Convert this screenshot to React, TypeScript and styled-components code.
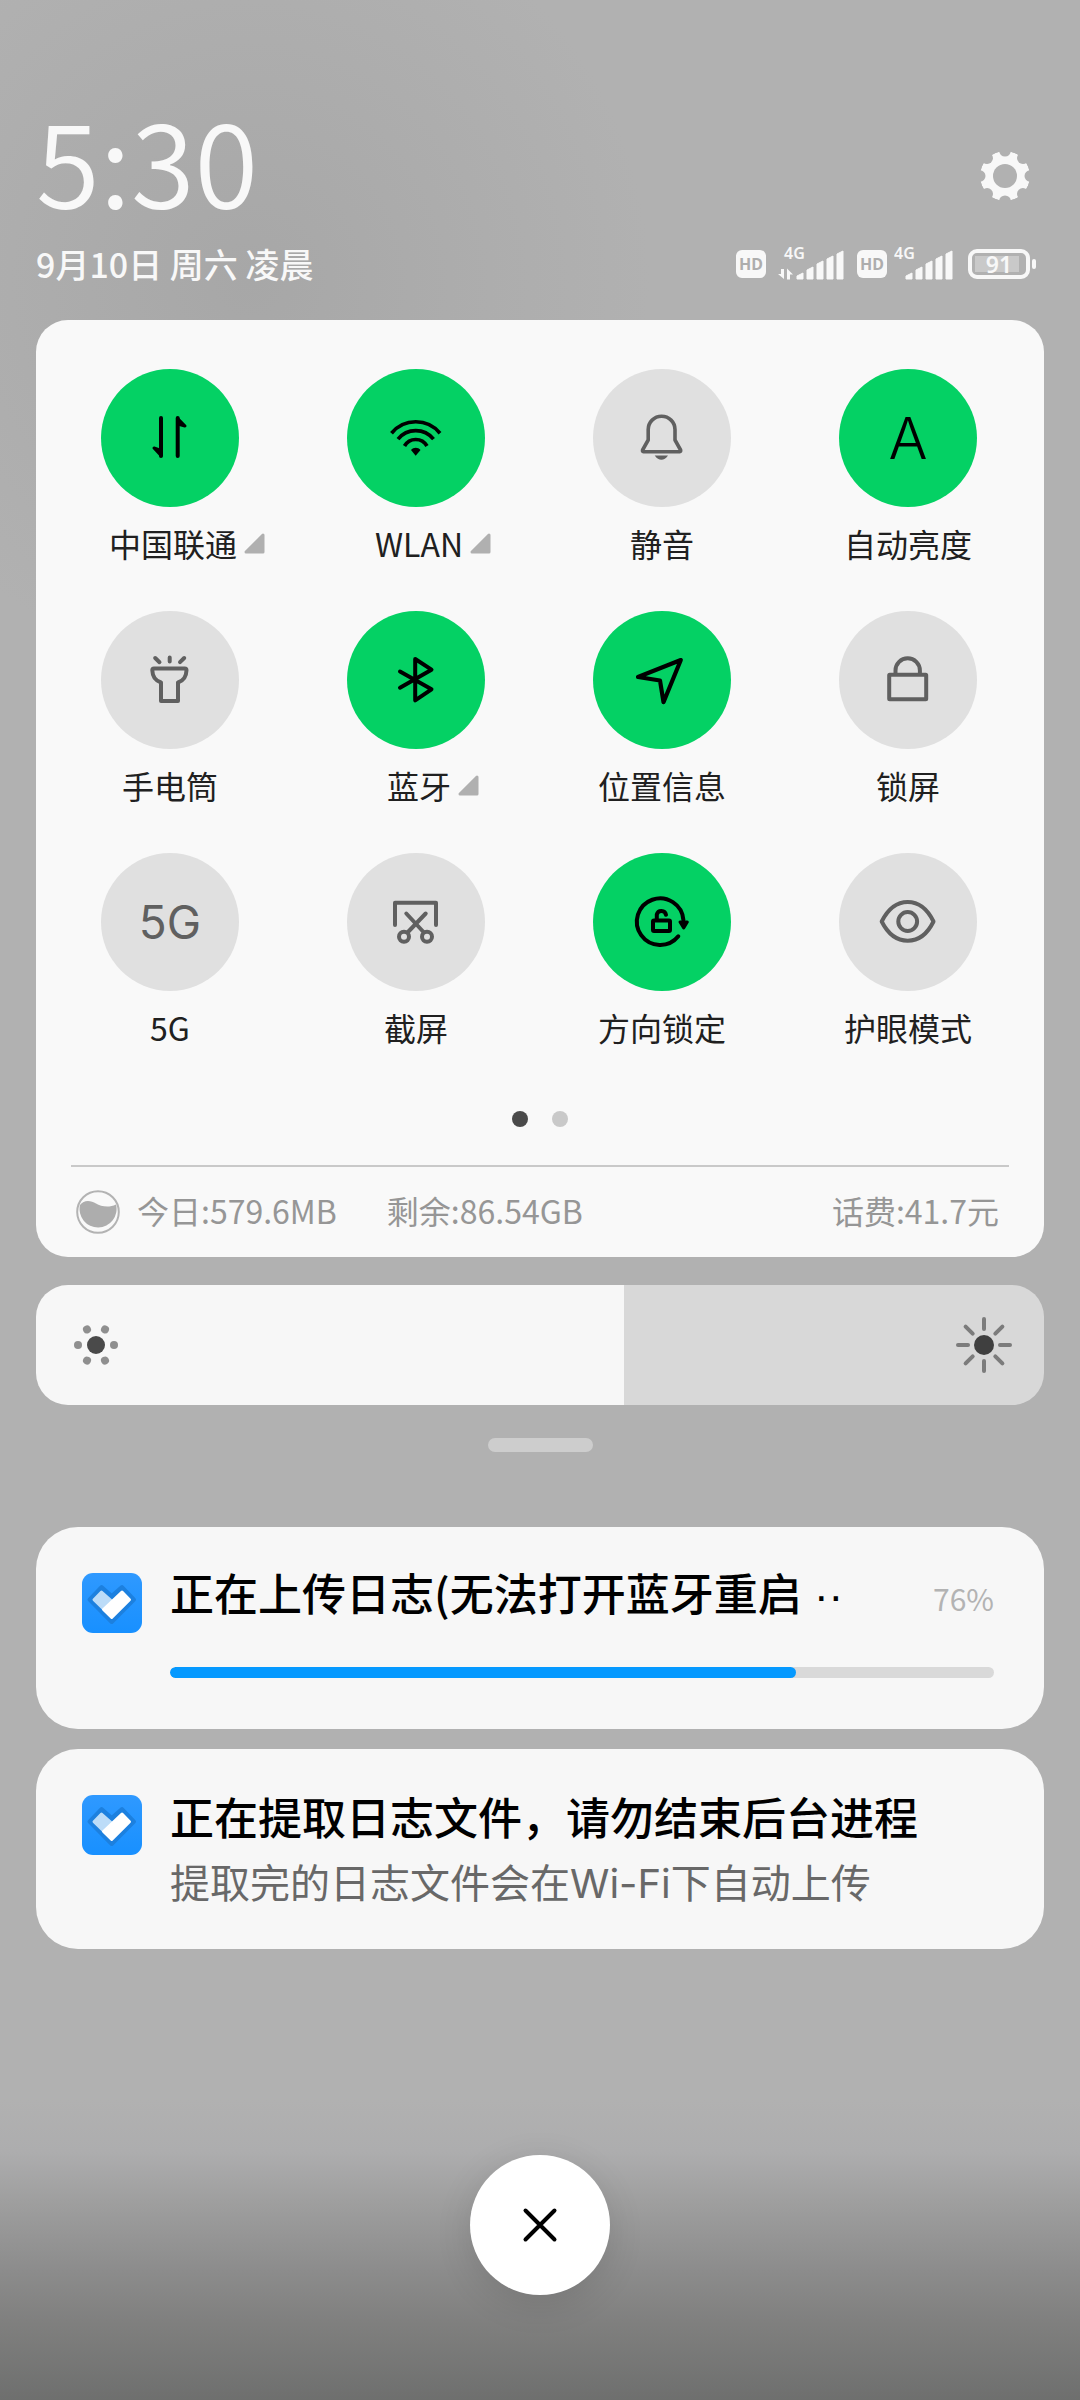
import React, { useState } from "react";
import styled, { createGlobalStyle } from "styled-components";

const GlobalStyle = createGlobalStyle`
  *, *::before, *::after { box-sizing: border-box; }
  body {
    margin: 0;
    background: #b1b1b1;
    font-family: "Noto Sans CJK SC", "Noto Sans", sans-serif;
  }
  button { font: inherit; color: inherit; border: 0; padding: 0; background: none; cursor: pointer; }
  ul { list-style: none; margin: 0; padding: 0; }
  h1, h2, p { margin: 0; font-weight: inherit; }
`;

const Shade = styled.main`
  display: flex;
  flex-direction: column;
  min-height: 100vh;
  padding: 82px 36px 105px;
  background:
    linear-gradient(to top, #6e6f6e 0, #80807f 80px, #8c8c8c 130px, #9f9f9f 200px, #adadae 248px, rgba(177, 177, 177, 0) 300px),
    radial-gradient(circle at 250px 280px, #a7a7a7 0, rgba(167, 167, 167, 0) 400px),
    #b1b1b1;
`;

const Header = styled.header`
  display: flex;
  justify-content: space-between;
  align-items: flex-start;
  height: 154px;
`;

const Clock = styled.h1`
  font-size: 116px;
  line-height: 150px;
  font-weight: 350;
  color: #f8f8f8;
`;

const SettingsButton = styled.button`
  display: flex;
  margin: 69px 14px 0 0;
`;

const StatusRow = styled.div`
  display: flex;
  justify-content: space-between;
  align-items: center;
  height: 56px;
  margin-bottom: 28px;
  color: #f8f8f8;
`;

const DateText = styled.p`
  font-size: 34px;
  line-height: 48px;
  font-weight: 500;
`;

const StatusIcons = styled.div`
  display: flex;
  align-items: center;
  gap: 7px;
  padding-right: 8px;
`;

const HdBadge = styled.span`
  display: flex;
  align-items: center;
  justify-content: center;
  width: 30px;
  height: 28px;
  border-radius: 6px;
  background: #f8f8f8;
  color: #adadad;
  font: 700 16px/28px "Noto Sans", sans-serif;
`;

const Battery = styled.div`
  display: flex;
  align-items: center;
  gap: 2px;
  margin-left: 7px;
  &::after {
    content: "";
    width: 4px;
    height: 10px;
    border-radius: 2px;
    background: #f8f8f8;
  }
`;

const BatteryCell = styled.span`
  width: 62px;
  height: 30px;
  border: 4px solid #f8f8f8;
  border-radius: 9px;
  background: linear-gradient(#c9c9c9, #c9c9c9) 3px 3px / 44px 16px no-repeat;
  font: 600 23px/22px "Noto Sans", sans-serif;
  text-align: center;
`;

const Panel = styled.section`
  border-radius: 32px;
  background: #f9f9f9;
  padding: 49px 13px 0 11px;
`;

const TileGrid = styled.ul`
  display: grid;
  grid-template-columns: repeat(4, 1fr);
  row-gap: 46px;
`;

const Tile = styled.button`
  display: flex;
  flex-direction: column;
  align-items: center;
  gap: 14px;
  width: 100%;
`;

const TileDisc = styled.span<{ $on?: boolean }>`
  display: flex;
  align-items: center;
  justify-content: center;
  width: 138px;
  height: 138px;
  border-radius: 50%;
  background: ${(p) => (p.$on ? "#04d164" : "#e0e0e0")};
  color: ${(p) => (p.$on ? "#000" : "#606060")};
`;

const TileGlyph = styled.span<{ $size: number; $weight: number }>`
  font-family: Inter, sans-serif;
  font-size: ${(p) => p.$size}px;
  line-height: 60px;
  font-weight: ${(p) => p.$weight};
`;

const TileLabel = styled.span<{ $more?: boolean }>`
  display: grid;
  grid-template-columns: 1fr auto 1fr;
  align-items: center;
  width: 100%;
  padding-left: ${(p) => (p.$more ? 6 : 0)}px;
  font-size: 32px;
  line-height: 44px;
  color: #202020;
  & > span { grid-column: 2; white-space: nowrap; }
  & > svg { margin-left: 5px; }
`;

const Pager = styled.div`
  display: flex;
  justify-content: center;
  gap: 24px;
  margin-top: 62px;
  padding-left: 2px;
`;

const PagerDot = styled.button<{ $current?: boolean }>`
  width: 16px;
  height: 16px;
  border-radius: 50%;
  background: ${(p) => (p.$current ? "#4a4a4a" : "#c9c9c9")};
`;

const Usage = styled.footer`
  display: flex;
  align-items: center;
  height: 92px;
  margin: 38px 22px 0 24px;
  padding: 0 10px 0 5px;
  border-top: 2px solid #c9c9c9;
  color: #969696;
  font-size: 32px;
  line-height: 44px;
`;

const UsageItem = styled.span`
  margin-left: 17px;
  padding-bottom: 4px;
  & + & { margin-left: 50px; }
  &:last-child { margin-left: auto; }
`;

const Brightness = styled.div`
  display: grid;
  align-items: center;
  margin-top: 28px;
  & > * { grid-area: 1 / 1; }
  & > svg { pointer-events: none; }
  & > svg:last-child { justify-self: end; }
`;

const Range = styled.input`
  appearance: none;
  width: 100%;
  height: 120px;
  margin: 0;
  border-radius: 32px;
  &::-webkit-slider-thumb { appearance: none; width: 1px; height: 120px; background: transparent; }
`;

const Handle = styled.div`
  width: 105px;
  height: 14px;
  margin: 33px auto 75px;
  border-radius: 7px;
  background: #cdcdcd;
`;

const Notices = styled.ul`
  display: flex;
  flex-direction: column;
  gap: 20px;
`;

const Notice = styled.li`
  display: flex;
  align-items: flex-start;
  gap: 28px;
  padding: 34px 50px 30px 46px;
  border-radius: 42px;
  background: #f7f7f7;
  & > svg { flex: none; margin-top: 12px; }
`;

const NoticeBody = styled.div`
  flex: 1;
  min-width: 0;
`;

const NoticeHead = styled.div`
  display: flex;
  justify-content: space-between;
  align-items: center;
  height: 66px;
`;

const NoticeTitle = styled.h2`
  font-size: 44px;
  line-height: 66px;
  font-weight: 500;
  color: #000;
  white-space: nowrap;
`;

const Clipped = styled.span`
  font-family: "Liberation Sans", sans-serif;
`;

const Percent = styled.span`
  padding-top: 8px;
  font-size: 30px;
  line-height: 44px;
  color: #b3b3b3;
`;

const NoticeText = styled.p`
  font-family: Inter, "Noto Sans CJK SC", sans-serif;
  font-size: 40px;
  line-height: 70px;
  color: #686868;
`;

const Track = styled.div`
  height: 11px;
  margin: 40px 0 21px;
  border-radius: 6px;
  background: #d9d9d9;
  overflow: hidden;
`;

const Bar = styled.div`
  height: 100%;
  border-radius: 6px;
  background: #0599ff;
`;

const CloseButton = styled.button`
  display: flex;
  align-items: center;
  justify-content: center;
  width: 140px;
  height: 140px;
  margin: auto auto 0;
  border-radius: 50%;
  background: #fff;
  box-shadow: 0 8px 36px rgba(0, 0, 0, 0.12);
`;

const TileIcon = ({ children, width = 4 }: { children: React.ReactNode; width?: number }) => (
  <svg
    width="138"
    height="138"
    viewBox="0 0 138 138"
    fill="none"
    stroke="currentColor"
    strokeWidth={width}
    strokeLinecap="round"
    strokeLinejoin="round"
    aria-hidden="true"
  >
    {children}
  </svg>
);

const icons: Record<string, React.ReactNode> = {
  data: (
    <TileIcon>
      <path d="M60 49V87M76.7 49V87" />
      <path d="M60 86.500L53 79L60 81.500ZM76.700 49.500L84 57L76.700 55Z" fill="currentColor" strokeWidth="3" />
    </TileIcon>
  ),
  wifi: (
    <TileIcon width={3.7}>
      <g strokeLinecap="butt">
        <path d="M44.500 64.200A31.400 31.400 0 0 1 93 64.200" />
        <path d="M51 70.200A22.700 22.700 0 0 1 86.500 70.200" />
        <path d="M57.500 77A13 13 0 0 1 80 77" />
      </g>
      <path d="M64 81C66.500 77.900 71 77.900 73.500 81L68.700 86.700Z" fill="currentColor" stroke="none" />
    </TileIcon>
  ),
  bell: (
    <TileIcon width={3.6}>
      <path d="M55.200 71V60.600A13.400 13.400 0 0 1 82 60.600V71L87.600 81Q88 82.700 86.800 82.700H50.400Q49.200 82.700 49.600 81Z" />
      <path d="M61.700 86.500H75Q72 90.800 68.400 90.800T61.700 86.500Z" fill="currentColor" stroke="none" />
    </TileIcon>
  ),
  torch: (
    <TileIcon>
      <path d="M68.700 46.500V50.500M54.200 47L58.500 51.200M83.200 47L79 51.200" />
      <path d="M53 57.500H83.700Q85.500 57.500 85.500 59.300C85.300 66 82 70 77 71.500V90H60V71.500C55 70 51.500 66 51.300 59.300Q51.300 57.500 53 57.500Z" />
    </TileIcon>
  ),
  bluetooth: (
    <TileIcon>
      <path d="M53 60.500L84.500 78.300L68.200 89.300V48L84.500 58.700L53 76.700" />
    </TileIcon>
  ),
  location: (
    <TileIcon width={4.2}>
      <path d="M87.800 49L45 66L67 69.500L70.500 91.200Z" />
    </TileIcon>
  ),
  lock: (
    <TileIcon>
      <rect x="50.200" y="63.700" width="37" height="24.600" rx="0.500" />
      <path d="M56.500 63V59.500A12.200 12.200 0 0 1 80.900 59.500V63" strokeLinecap="butt" />
    </TileIcon>
  ),
  screenshot: (
    <TileIcon>
      <path d="M48 72V49.800H89V72" />
      <path d="M59.300 60.500L76.500 79M78.700 60.500L61 79" />
      <circle cx="57" cy="83.700" r="5" />
      <circle cx="80" cy="83.700" r="5" />
    </TileIcon>
  ),
  rotation: (
    <TileIcon>
      <path d="M85.300 83.300A23.300 23.300 0 1 1 90.400 67" />
      <path d="M87 69H94.300L90.700 75Z" fill="currentColor" strokeWidth="3" />
      <rect x="60" y="67.500" width="17" height="10.500" rx="1" />
      <path d="M63.800 67V61.500A4.700 4.700 0 0 1 73 61.800" />
    </TileIcon>
  ),
  eye: (
    <TileIcon>
      <path d="M42.700 68.500C49 56 58 49 68.700 49S88.400 56 94.500 68.500C88.400 81 79.400 87.700 68.700 87.700S49 81 42.700 68.500Z" />
      <circle cx="68.700" cy="68.500" r="9.400" />
    </TileIcon>
  ),
  auto: <TileGlyph $size={58} $weight={300}>A</TileGlyph>,
  fiveG: <TileGlyph $size={46} $weight={400}>5G</TileGlyph>,
};

const tiles = [
  { label: "中国联通", icon: "data", on: true, more: true },
  { label: "WLAN", icon: "wifi", on: true, more: true },
  { label: "静音", icon: "bell" },
  { label: "自动亮度", icon: "auto", on: true },
  { label: "手电筒", icon: "torch" },
  { label: "蓝牙", icon: "bluetooth", on: true, more: true },
  { label: "位置信息", icon: "location", on: true },
  { label: "锁屏", icon: "lock" },
  { label: "5G", icon: "fiveG" },
  { label: "截屏", icon: "screenshot" },
  { label: "方向锁定", icon: "rotation", on: true },
  { label: "护眼模式", icon: "eye" },
];

const MoreCorner = () => (
  <svg width="24" height="24" viewBox="0 0 24 24" aria-hidden="true">
    <path d="M4 21L21 4V21Z" fill="#b0b0b0" stroke="#b0b0b0" strokeWidth="3" strokeLinejoin="round" />
  </svg>
);

const Gear = () => (
  <svg width="50" height="50" viewBox="-25 -25 50 50" aria-hidden="true">
    <mask id="gear-cut">
      <circle r="25" fill="#fff" />
      <circle r="12" fill="#000" />
      {[0, 45, 90, 135, 180, 225, 270, 315].map((a) => (
        <ellipse key={a} cx="25" rx="5.500" ry="5.800" fill="#000" transform={`rotate(${a})`} />
      ))}
    </mask>
    <circle r="25" fill="#f8f8f8" mask="url(#gear-cut)" />
  </svg>
);

const bars = [8, 14, 20, 25, 30];

const Signal = ({ active }: { active?: boolean }) => {
  const left = active ? 24 : 12;
  const width = active ? 77 : 60;
  return (
    <svg width={width} height="46" viewBox={`0 0 ${width} 46`} fill="currentColor" role="img" aria-label="4G">
      <text x={active ? 11 : 0} y="18" fontFamily="Noto Sans, sans-serif" fontSize="16" fontWeight="600">4G</text>
      {bars.map((h, i) => (
        <path key={h} d={`M${left + i * 10} 38V${43 - h}L${left + 6 + i * 10} ${40 - h}V38Z`} stroke="currentColor" strokeLinejoin="round" />
      ))}
      {active && <path d="M11 28V38L5 33H8V28ZM14 38.500V27.500L20 33.500H17V38.500Z" />}
    </svg>
  );
};

const Droplet = () => (
  <svg width="44" height="44" viewBox="0 0 44 44" aria-hidden="true">
    <circle cx="22" cy="22" r="20.800" fill="none" stroke="#b3b3b3" strokeWidth="2" />
    <path d="M4 15C8 9.500 15 10.500 20 13.500S33 18 40 14.500A18.500 18.500 0 1 1 4 15Z" fill="#adadad" />
  </svg>
);

const DimSun = () => (
  <svg width="120" height="60" viewBox="-60 -30 120 60" aria-hidden="true">
    <circle r="9" fill="#4a4a4a" />
    {[0, 60, 120, 180, 240, 300].map((a) => (
      <circle key={a} cx="18" r="4" fill="#8f8f8f" transform={`rotate(${a})`} />
    ))}
  </svg>
);

const BrightSun = () => (
  <svg width="120" height="60" viewBox="-60 -30 120 60" aria-hidden="true">
    <circle r="10" fill="#3f3f3f" />
    {[0, 45, 90, 135, 180, 225, 270, 315].map((a) => (
      <path key={a} d="M16 0H26" stroke="#7c7c7c" strokeWidth="4" strokeLinecap="round" transform={`rotate(${a})`} />
    ))}
  </svg>
);

const AppLogo = ({ id }: { id: string }) => (
  <svg width="60" height="60" viewBox="0 0 60 60" aria-hidden="true">
    <linearGradient id={id} x1="0" y1="0" x2="0" y2="1">
      <stop offset="0" stopColor="#2f99ff" />
      <stop offset="1" stopColor="#1890ff" />
    </linearGradient>
    <rect width="60" height="60" rx="11" fill={`url(#${id})`} />
    <path d="M7.500 26.700L19.500 14L29.700 23L40 14L52 26.700L29.700 49Z" fill="#1c80df" stroke="#1c80df" strokeWidth="4" strokeLinejoin="round" />
    <path d="M12 26.700L19.500 19L29.700 28L21 35.500Z" fill="#bcdcf8" stroke="#bcdcf8" strokeWidth="3" strokeLinejoin="round" />
    <path d="M21.500 36.500L40 19L47.500 26.700L29.700 44.500Z" fill="#fff" stroke="#fff" strokeWidth="3" strokeLinejoin="round" />
  </svg>
);

export default function App() {
  const [level, setLevel] = useState(583);
  const progress = 76;
  const fill = level / 10;
  return (
    <>
      <GlobalStyle />
      <Shade>
        <Header>
          <Clock>5:30</Clock>
          <SettingsButton aria-label="设置"><Gear /></SettingsButton>
        </Header>
        <StatusRow>
          <DateText>9月10日 周六 凌晨</DateText>
          <StatusIcons>
            <HdBadge>HD</HdBadge>
            <Signal active />
            <HdBadge>HD</HdBadge>
            <Signal />
            <Battery><BatteryCell>91</BatteryCell></Battery>
          </StatusIcons>
        </StatusRow>
        <Panel>
          <TileGrid>
            {tiles.map((t) => (
              <li key={t.label}>
                <Tile aria-pressed={!!t.on}>
                  <TileDisc $on={t.on}>{icons[t.icon]}</TileDisc>
                  <TileLabel $more={t.more}>
                    <span>{t.label}</span>
                    {t.more && <MoreCorner />}
                  </TileLabel>
                </Tile>
              </li>
            ))}
          </TileGrid>
          <Pager>
            <PagerDot $current aria-label="第1页" />
            <PagerDot aria-label="第2页" />
          </Pager>
          <Usage>
            <Droplet />
            <UsageItem>今日:579.6MB</UsageItem>
            <UsageItem>剩余:86.54GB</UsageItem>
            <UsageItem>话费:41.7元</UsageItem>
          </Usage>
        </Panel>
        <Brightness>
          <Range
            type="range"
            min={0}
            max={1000}
            value={level}
            aria-label="亮度"
            onChange={(e) => setLevel(Number(e.target.value))}
            style={{ background: `linear-gradient(to right, #f7f7f7 ${fill}%, #d8d8d8 ${fill}%)` }}
          />
          <DimSun />
          <BrightSun />
        </Brightness>
        <Handle />
        <Notices>
          <Notice>
            <AppLogo id="logo-upload" />
            <NoticeBody>
              <NoticeHead>
                <NoticeTitle>正在上传日志(无法打开蓝牙重启<Clipped> ··</Clipped></NoticeTitle>
                <Percent>{progress}%</Percent>
              </NoticeHead>
              <Track role="progressbar" aria-label="上传进度" aria-valuenow={progress}>
                <Bar style={{ width: `${progress}%` }} />
              </Track>
            </NoticeBody>
          </Notice>
          <Notice>
            <AppLogo id="logo-extract" />
            <NoticeBody>
              <NoticeHead>
                <NoticeTitle>正在提取日志文件，请勿结束后台进程</NoticeTitle>
              </NoticeHead>
              <NoticeText>提取完的日志文件会在Wi-Fi下自动上传</NoticeText>
            </NoticeBody>
          </Notice>
        </Notices>
        <CloseButton aria-label="关闭">
          <svg width="40" height="40" viewBox="0 0 40 40" stroke="#000" strokeWidth="4" strokeLinecap="round" aria-hidden="true">
            <path d="M5.500 5.500L34.500 34.500M34.500 5.500L5.500 34.500" />
          </svg>
        </CloseButton>
      </Shade>
    </>
  );
}
